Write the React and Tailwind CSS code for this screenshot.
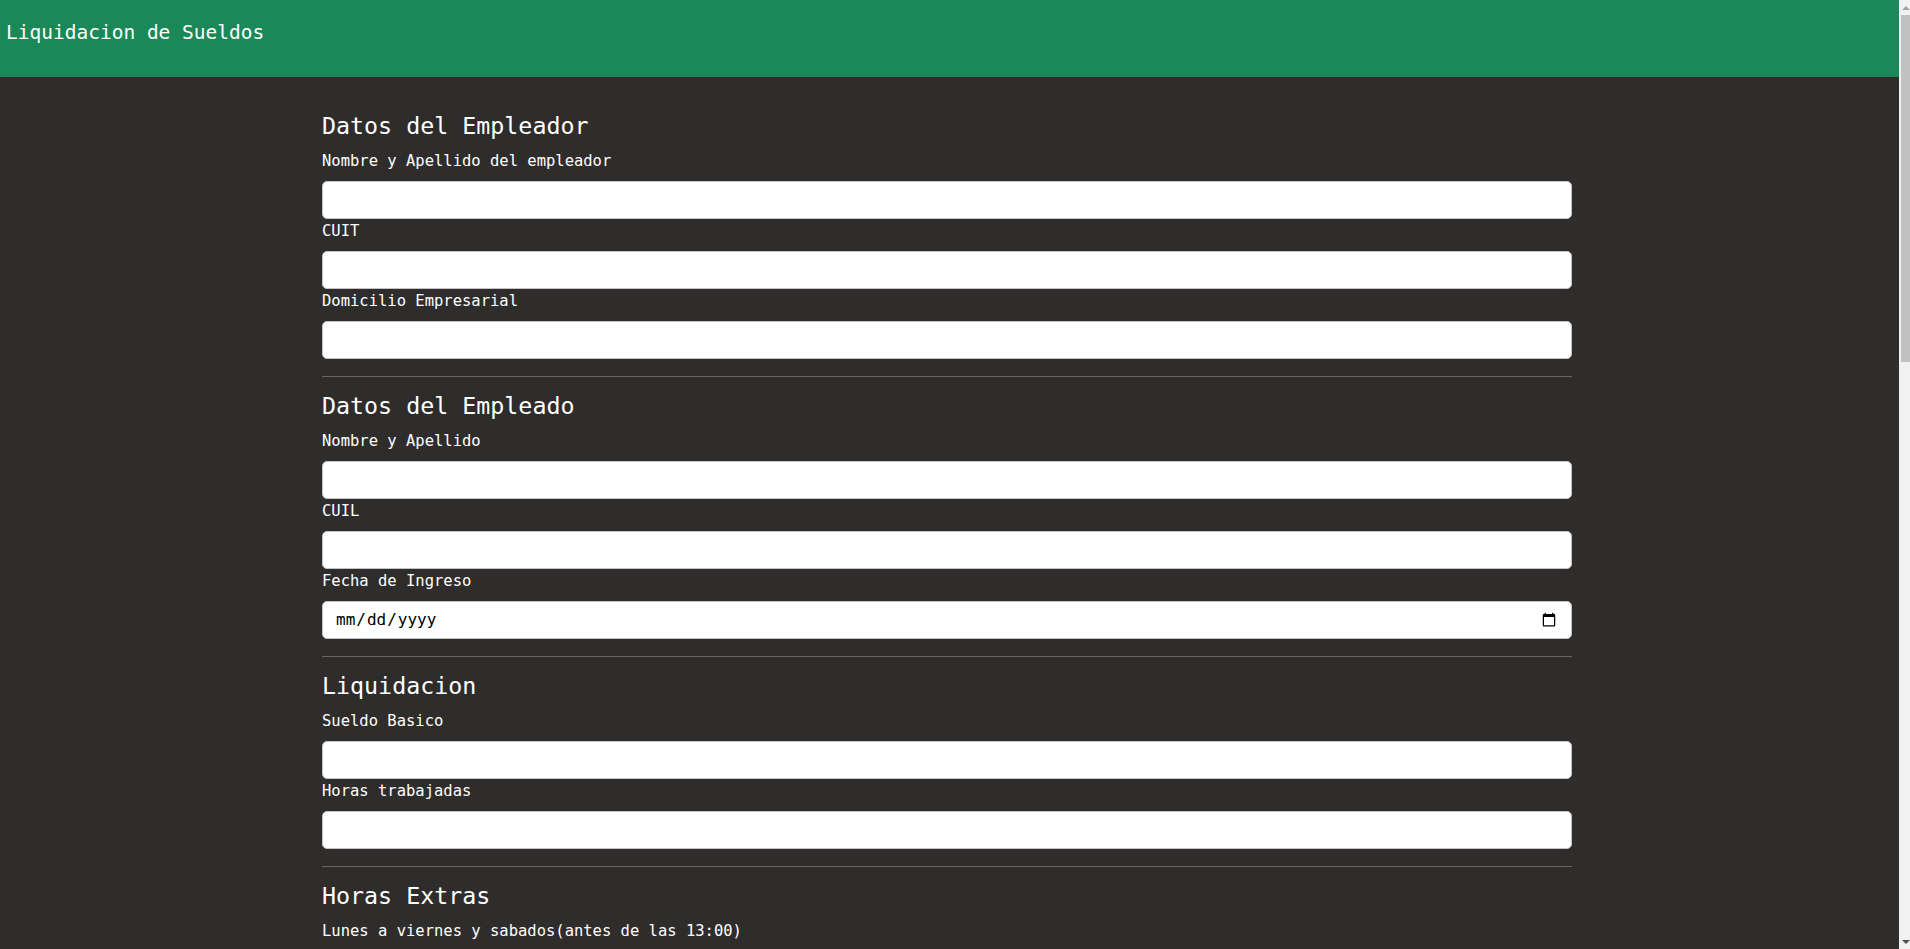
import { useState } from 'react';

const secciones = [
  {
    titulo: 'Datos del Empleador',
    campos: [
      { id: 'empleador', label: 'Nombre y Apellido del empleador' },
      { id: 'cuit', label: 'CUIT' },
      { id: 'domicilio', label: 'Domicilio Empresarial' }
    ]
  },
  {
    titulo: 'Datos del Empleado',
    campos: [
      { id: 'empleado', label: 'Nombre y Apellido' },
      { id: 'cuil', label: 'CUIL' },
      { id: 'ingreso', label: 'Fecha de Ingreso', type: 'date' }
    ]
  },
  {
    titulo: 'Liquidacion',
    campos: [
      { id: 'basico', label: 'Sueldo Basico' },
      { id: 'horas', label: 'Horas trabajadas' }
    ]
  },
  {
    titulo: 'Horas Extras',
    campos: [
      { id: 'extras50', label: 'Lunes a viernes y sabados(antes de las 13:00)' },
      { id: 'extras100', label: 'Sabados(despues de las 13:00), domingos y feriados' }
    ]
  }
];

export default function App() {
  const [valores, setValores] = useState({});

  const actualizar = (id, value) => {
    setValores((prev) => ({ ...prev, [id]: value }));
  };

  return (
    <div className="flex h-screen bg-[#2f2d2c] text-white font-['DejaVu_Sans_Mono','Liberation_Mono',monospace]">
      <div className="flex-1 overflow-y-auto [scrollbar-width:none]">
        <header className="h-[77px] bg-[#1a8957] px-[6px] pt-[20px]">
          <h1 className="text-[19.5px] leading-[26px]">Liquidacion de Sueldos</h1>
        </header>

        <main className="w-[1250px] ml-[322px] pb-10">
          {secciones.map((seccion, index) => (
            <section
              key={seccion.titulo}
              className={
                index === 0
                  ? 'pt-[33px] pb-[17px] border-b border-[#6a6866]'
                  : index === secciones.length - 1
                    ? 'pt-[13px] pb-[17px]'
                    : 'pt-[13px] pb-[17px] border-b border-[#6a6866]'
              }
            >
              <h2 className="text-[23.3px] leading-[32px] mb-[7px]">{seccion.titulo}</h2>
              {seccion.campos.map((campo) => (
                <div key={campo.id}>
                  <label htmlFor={campo.id} className="block text-[15.5px] leading-[24px] mb-[8px]">
                    {campo.label}
                  </label>
                  <input
                    id={campo.id}
                    type={campo.type || 'text'}
                    value={valores[campo.id] ?? ''}
                    onChange={(event) => actualizar(campo.id, event.target.value)}
                    className="block w-full h-[38px] rounded-[5px] border border-[#c4c4c8] bg-white px-[12px] text-[16px] text-black focus:outline-none"
                  />
                </div>
              ))}
            </section>
          ))}
        </main>
      </div>

      {/* barra de desplazamiento */}
      <div className="w-[11px] flex flex-col bg-[#f1f1f1]">
        <div className="h-[15px] flex items-center justify-center pl-[3px]">
          <div className="w-0 h-0 border-x-[4px] border-x-transparent border-b-[4px] border-b-[#a3a3a3]" />
        </div>
        <div className="h-[347px] ml-[2px] bg-[#c1c1c1]" />
        <div className="flex-1" />
        <div className="h-[15px] flex items-center justify-center pl-[3px]">
          <div className="w-0 h-0 border-x-[4px] border-x-transparent border-t-[4px] border-t-[#505050]" />
        </div>
      </div>
    </div>
  );
}
